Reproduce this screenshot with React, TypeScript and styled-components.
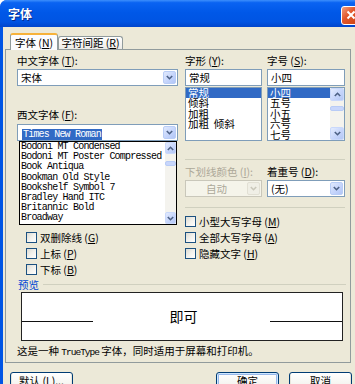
import React from "react";
import styled, { createGlobalStyle } from "styled-components";

const GlobalStyle = createGlobalStyle`
  html, body {
    margin: 0;
    padding: 0;
    background: #ffffff;
  }
  body {
    font-family: "Noto Sans CJK SC", "Liberation Sans", sans-serif;
    font-size: 10.5px;
    color: #000;
  }
`;

const CJK = `"Noto Sans CJK SC", "Liberation Sans", sans-serif`;
const MONO = `"Liberation Mono", "DejaVu Sans Mono", monospace`;

const Window = styled.div`
  width: 355px;
  height: 384px;
  overflow: hidden;
  display: flex;
  flex-direction: column;
  border-top-left-radius: 7px;
  background: #0055e5;
`;

const TitleBar = styled.div`
  flex: none;
  height: 27px;
  display: flex;
  align-items: center;
  justify-content: space-between;
  padding-left: 8px;
  overflow: hidden;
  background: linear-gradient(
    #3d8ffc 0%,
    #0a63f2 10%,
    #0058e8 45%,
    #0054e3 80%,
    #0045cc 100%
  );
`;

const Title = styled.span`
  color: #fff;
  font-family: ${CJK};
  font-weight: bold;
  font-size: 12px;
  text-shadow: 1px 1px #0b2a8a;
`;

const CloseButton = styled.div`
  width: 20px;
  height: 19px;
  margin-right: -6px;
  margin-top: 3px;
  box-sizing: border-box;
  border: 1px solid #fff;
  border-radius: 3px;
  background: linear-gradient(135deg, #f0a080 0%, #e2582c 40%, #c9400f 100%);
  display: flex;
  align-items: center;
  justify-content: flex-start;
  padding-left: 4px;
`;

const Body = styled.div`
  flex: 1;
  margin-left: 3px;
  background: #ece9d8;
  padding: 6px 0 0 2px;
  display: flex;
  flex-direction: column;
`;

const TabStrip = styled.div`
  display: flex;
  align-items: flex-end;
  height: 16px;
  padding-left: 5px;
  position: relative;
  z-index: 2;
`;

const Tab = styled.div<{ $active?: boolean }>`
  box-sizing: border-box;
  width: ${p => (p.$active ? "48px" : "65px")};
  height: ${p => (p.$active ? "17px" : "13px")};
  margin-bottom: ${p => (p.$active ? "-1px" : "0")};
  border: 1px solid #919b9c;
  border-bottom: none;
  border-top: ${p => (p.$active ? "2px solid #f7b23a" : "1px solid #919b9c")};
  border-radius: 3px 3px 0 0;
  background: ${p =>
    p.$active ? "#fcfcfe" : "linear-gradient(#ffffff, #ecebe6)"};
  display: flex;
  align-items: center;
  justify-content: center;
  white-space: nowrap;
  line-height: 12px;
`;

const Mn = styled.span`
  text-decoration: underline;
`;

const Panel = styled.div`
  box-sizing: border-box;
  width: 346px;
  height: 314px;
  border: 1px solid #919b9c;
  background: #ece9d8;
  padding: 4px 4px 0 11px;
  display: flex;
  flex-direction: column;
`;

const TopArea = styled.div`
  display: flex;
`;

const LeftCol = styled.div`
  width: 161px;
  display: flex;
  flex-direction: column;
`;

const RightCol = styled.div`
  width: 160px;
  margin-left: 7px;
  display: flex;
  flex-direction: column;
`;

const Label = styled.div<{ $top?: number; $disabled?: boolean }>`
  height: 14px;
  line-height: 14px;
  white-space: nowrap;
  margin-top: ${p => p.$top || 0}px;
  color: ${p => (p.$disabled ? "#aca899" : "#000")};
`;

const ComboWrap = styled.div`
  position: relative;
  margin-top: 2px;
`;

const Combo = styled.div<{ $top?: number; $disabled?: boolean }>`
  box-sizing: border-box;
  height: 17px;
  margin-top: ${p => p.$top || 0}px;
  border: 1px solid ${p => (p.$disabled ? "#c9c7ba" : "#7f9db9")};
  background: ${p => (p.$disabled ? "#f5f4ea" : "#fff")};
  display: flex;
  align-items: center;
`;

const ComboText = styled.div<{ $center?: boolean; $disabled?: boolean }>`
  flex: 1;
  padding-left: ${p => (p.$center ? "0" : "3px")};
  text-align: ${p => (p.$center ? "center" : "left")};
  line-height: 13px;
  white-space: nowrap;
  color: ${p => (p.$disabled ? "#aca899" : "#000")};
`;

const SelectedMono = styled.span`
  margin-left: 1px;
  padding: 0 1px;
  font-family: ${MONO};
  font-size: 10px;
  letter-spacing: -0.8px;
  line-height: 10px;
  background: #316ac5;
  color: #fff;
`;

const DropBtn = styled.div<{ $disabled?: boolean }>`
  box-sizing: border-box;
  width: 13px;
  height: 13px;
  margin-right: 1px;
  border-radius: 2px;
  border: 1px solid ${p => (p.$disabled ? "#e2e0d4" : "#b9cdf6")};
  background: ${p =>
    p.$disabled
      ? "#f0efe6"
      : "linear-gradient(135deg, #e0e9fd 0%, #c3d3fb 60%, #b2c6f6 100%)"};
  display: flex;
  align-items: center;
  justify-content: center;
`;

const DropList = styled.div`
  position: absolute;
  top: 100%;
  left: 2px;
  right: 1px;
  height: 84px;
  box-sizing: border-box;
  border: 1px solid #000;
  background: #fff;
  display: flex;
  z-index: 5;
`;

const ListItems = styled.div`
  flex: 1;
  display: flex;
  flex-direction: column;
  overflow: hidden;
`;

const MonoItem = styled.div`
  height: 10.2px;
  line-height: 10.2px;
  padding-left: 1px;
  font-family: ${MONO};
  font-size: 10px;
  letter-spacing: -0.8px;
  white-space: nowrap;
`;

const Pair = styled.div<{ $top?: number }>`
  display: grid;
  grid-template-columns: 77px 78px;
  column-gap: 5px;
  margin-top: ${p => p.$top || 0}px;
`;

const Field = styled.div`
  display: flex;
  flex-direction: column;
`;

const TextBox = styled.div`
  box-sizing: border-box;
  height: 17px;
  margin-top: 1px;
  border: 1px solid #7f9db9;
  background: #fff;
  padding-left: 3px;
  line-height: 15px;
`;

const ListBox = styled.div`
  box-sizing: border-box;
  height: 54px;
  margin-top: 1px;
  border: 1px solid #7f9db9;
  background: #fff;
  display: flex;
  overflow: hidden;
`;

const ListItem = styled.div<{ $selected?: boolean }>`
  height: 10.4px;
  line-height: 10.4px;
  padding-left: 2px;
  white-space: pre;
  background: ${p => (p.$selected ? "#316ac5" : "transparent")};
  color: ${p => (p.$selected ? "#fff" : "#000")};
`;

const Scrollbar = styled.div<{ $width: number }>`
  flex: none;
  width: ${p => p.$width}px;
  display: flex;
  flex-direction: column;
  background: #f4f3ee;
`;

const ScrollBtn = styled.div<{ $h: number }>`
  box-sizing: border-box;
  height: ${p => p.$h}px;
  border: 1px solid #c9d8fb;
  border-radius: 2px;
  background: linear-gradient(135deg, #e4ecfe 0%, #c6d5fb 55%, #b4c7f5 100%);
  display: flex;
  align-items: center;
  justify-content: center;
`;

const Track = styled.div`
  flex: 1;
`;

const Thumb = styled.div<{ $top: number; $h: number }>`
  box-sizing: border-box;
  margin-top: ${p => p.$top}px;
  height: ${p => p.$h}px;
  border: 1px solid #b8cbf6;
  border-radius: 2px;
  background: #c8d6fb;
`;

const Separator = styled.div<{ $top: number }>`
  height: 1px;
  margin-top: ${p => p.$top}px;
  background: #d0d0bf;
`;

const Effects = styled.div`
  display: grid;
  grid-template-columns: 159px 1fr;
  grid-template-rows: repeat(4, 16px);
  grid-auto-flow: column;
  padding-left: 9px;
  margin-top: 5px;
`;

const CheckRow = styled.div`
  display: flex;
  align-items: center;
  gap: 3px;
  white-space: nowrap;
`;

const Box = styled.div`
  box-sizing: border-box;
  width: 11px;
  height: 11px;
  border: 1px solid #1c5180;
  background: linear-gradient(135deg, #dcdbd3 0%, #f2f1ec 50%, #ffffff 100%);
`;

const Legend = styled.div`
  display: flex;
  align-items: center;
  height: 14px;
  margin-left: 1px;
  color: #0046d5;
  gap: 4px;
`;

const LegendLine = styled.div`
  flex: 1;
  height: 1px;
  background: #d0d0bf;
`;

const PreviewBox = styled.div`
  box-sizing: border-box;
  height: 49px;
  margin: 1px 3px 0 4px;
  border: 1px solid #222;
  background: #fff;
  display: grid;
  grid-template-columns: 71px 1fr 72px;
`;

const BaseLine = styled.div`
  height: 1px;
  margin-top: 28px;
  background: #111;
`;

const Sample = styled.div`
  text-align: center;
  line-height: 47px;
  font-size: 14px;
  padding-left: 4px;
`;

const Description = styled.div`
  margin-top: 3px;
  height: 14px;
  line-height: 14px;
  white-space: nowrap;
`;

const MonoWord = styled.span`
  font-family: ${MONO};
  font-size: 9.5px;
  letter-spacing: -1px;
`;

const ButtonRow = styled.div`
  display: flex;
  gap: 10px;
  margin-top: 9px;
  padding: 0 3px 0 5px;
`;

const Spacer = styled.div`
  flex: 1;
`;

const Button = styled.div<{ $default?: boolean }>`
  box-sizing: border-box;
  width: 63px;
  height: 23px;
  border: 1px solid #003c74;
  border-radius: 3px;
  background: linear-gradient(#ffffff 0%, #f4f3ee 60%, #e3e0d6 100%);
  box-shadow: ${p =>
    p.$default
      ? "inset 0 0 0 1px #cee7ff, inset 0 0 0 2px #98b8ea"
      : "inset 0 -1px 0 1px #e8e6dc"};
  display: flex;
  justify-content: center;
  padding-top: 1px;
  line-height: 14px;
  white-space: nowrap;
`;

const Chevron = ({ up, disabled }: { up?: boolean; disabled?: boolean }) => (
  <svg width="7" height="5" viewBox="0 0 7 5">
    <path
      d={up ? "M0.8 4 L3.5 1.3 L6.2 4" : "M0.8 1 L3.5 3.7 L6.2 1"}
      fill="none"
      stroke={disabled ? "#c9c7ba" : "#4d6185"}
      strokeWidth="1.6"
    />
  </svg>
);

const westernFonts = [
  "Bodoni MT Condensed",
  "Bodoni MT Poster Compressed",
  "Book Antiqua",
  "Bookman Old Style",
  "Bookshelf Symbol 7",
  "Bradley Hand ITC",
  "Britannic Bold",
  "Broadway",
];

const styles = ["常规", "倾斜", "加粗", "加粗  倾斜"];
const sizes = ["小四", "五号", "小五", "六号", "七号"];

// first left cell sits under the open font list
const leftChecks = [
  ["双删除线", "G"],
  ["上标", "P"],
  ["下标", "B"],
];
const rightChecks = [
  ["小型大写字母", "M"],
  ["全部大写字母", "A"],
  ["隐藏文字", "H"],
];

const Check = ({ text, k }: { text: string; k: string }) => (
  <CheckRow>
    <Box />
    <span>
      {text} (<Mn>{k}</Mn>)
    </span>
  </CheckRow>
);

export default function App() {
  return (
    <>
      <GlobalStyle />
      <Window>
        <TitleBar>
          <Title>字体</Title>
          <CloseButton>
            <svg width="10" height="10" viewBox="0 0 10 10">
              <path d="M1.5 1.5 L8.5 8.5 M8.5 1.5 L1.5 8.5" stroke="#fff" strokeWidth="2" />
            </svg>
          </CloseButton>
        </TitleBar>
        <Body>
          <TabStrip>
            <Tab $active>
              字体 (<Mn>N</Mn>)
            </Tab>
            <Tab>
              字符间距 (<Mn>R</Mn>)
            </Tab>
          </TabStrip>
          <Panel>
            <TopArea>
              <LeftCol>
                <Label>
                  中文字体 (<Mn>T</Mn>):
                </Label>
                <Combo $top={1}>
                  <ComboText>宋体</ComboText>
                  <DropBtn>
                    <Chevron />
                  </DropBtn>
                </Combo>
                <Label $top={22}>
                  西文字体 (<Mn>F</Mn>):
                </Label>
                <ComboWrap>
                  <Combo>
                    <ComboText>
                      <SelectedMono>Times New Roman</SelectedMono>
                    </ComboText>
                    <DropBtn>
                      <Chevron />
                    </DropBtn>
                  </Combo>
                  <DropList>
                    <ListItems>
                      {westernFonts.map(f => (
                        <MonoItem key={f}>{f}</MonoItem>
                      ))}
                    </ListItems>
                    <Scrollbar $width={11}>
                      <ScrollBtn $h={12}>
                        <Chevron up />
                      </ScrollBtn>
                      <Track>
                        <Thumb $top={7} $h={5} />
                      </Track>
                      <ScrollBtn $h={12}>
                        <Chevron />
                      </ScrollBtn>
                    </Scrollbar>
                  </DropList>
                </ComboWrap>
              </LeftCol>
              <RightCol>
                <Pair>
                  <Field>
                    <Label>
                      字形 (<Mn>Y</Mn>):
                    </Label>
                    <TextBox>常规</TextBox>
                    <ListBox>
                      <ListItems>
                        {styles.map((s, i) => (
                          <ListItem key={s} $selected={i === 0}>
                            {s}
                          </ListItem>
                        ))}
                      </ListItems>
                    </ListBox>
                  </Field>
                  <Field>
                    <Label>
                      字号 (<Mn>S</Mn>):
                    </Label>
                    <TextBox>小四</TextBox>
                    <ListBox>
                      <ListItems>
                        {sizes.map((s, i) => (
                          <ListItem key={s} $selected={i === 0}>
                            {s}
                          </ListItem>
                        ))}
                      </ListItems>
                      <Scrollbar $width={14}>
                        <ScrollBtn $h={13}>
                          <Chevron up />
                        </ScrollBtn>
                        <Track>
                          <Thumb $top={5} $h={5} />
                        </Track>
                        <ScrollBtn $h={13}>
                          <Chevron />
                        </ScrollBtn>
                      </Scrollbar>
                    </ListBox>
                  </Field>
                </Pair>
                <Separator $top={18} />
                <Pair $top={5}>
                  <Field>
                    <Label $disabled>
                      下划线颜色 (<Mn>I</Mn>):
                    </Label>
                    <Combo $top={1} $disabled>
                      <ComboText $center $disabled>
                        自动
                      </ComboText>
                      <DropBtn $disabled>
                        <Chevron disabled />
                      </DropBtn>
                    </Combo>
                  </Field>
                  <Field>
                    <Label>
                      着重号 (<Mn>D</Mn>):
                    </Label>
                    <Combo $top={1}>
                      <ComboText>(无)</ComboText>
                      <DropBtn>
                        <Chevron />
                      </DropBtn>
                    </Combo>
                  </Field>
                </Pair>
                <Separator $top={10} />
              </RightCol>
            </TopArea>
            <Effects>
              <div />
              {leftChecks.map(([t, k]) => (
                <Check key={t} text={t} k={k} />
              ))}
              {rightChecks.map(([t, k]) => (
                <Check key={t} text={t} k={k} />
              ))}
            </Effects>
            <Legend>
              预览
              <LegendLine />
            </Legend>
            <PreviewBox>
              <BaseLine />
              <Sample>即可</Sample>
              <BaseLine />
            </PreviewBox>
            <Description>
              这是一种 <MonoWord>TrueType</MonoWord> 字体，同时适用于屏幕和打印机。
            </Description>
          </Panel>
          <ButtonRow>
            <Button>
              默认 (<Mn>L</Mn>)...
            </Button>
            <Spacer />
            <Button $default>确定</Button>
            <Button>取消</Button>
          </ButtonRow>
        </Body>
      </Window>
    </>
  );
}
